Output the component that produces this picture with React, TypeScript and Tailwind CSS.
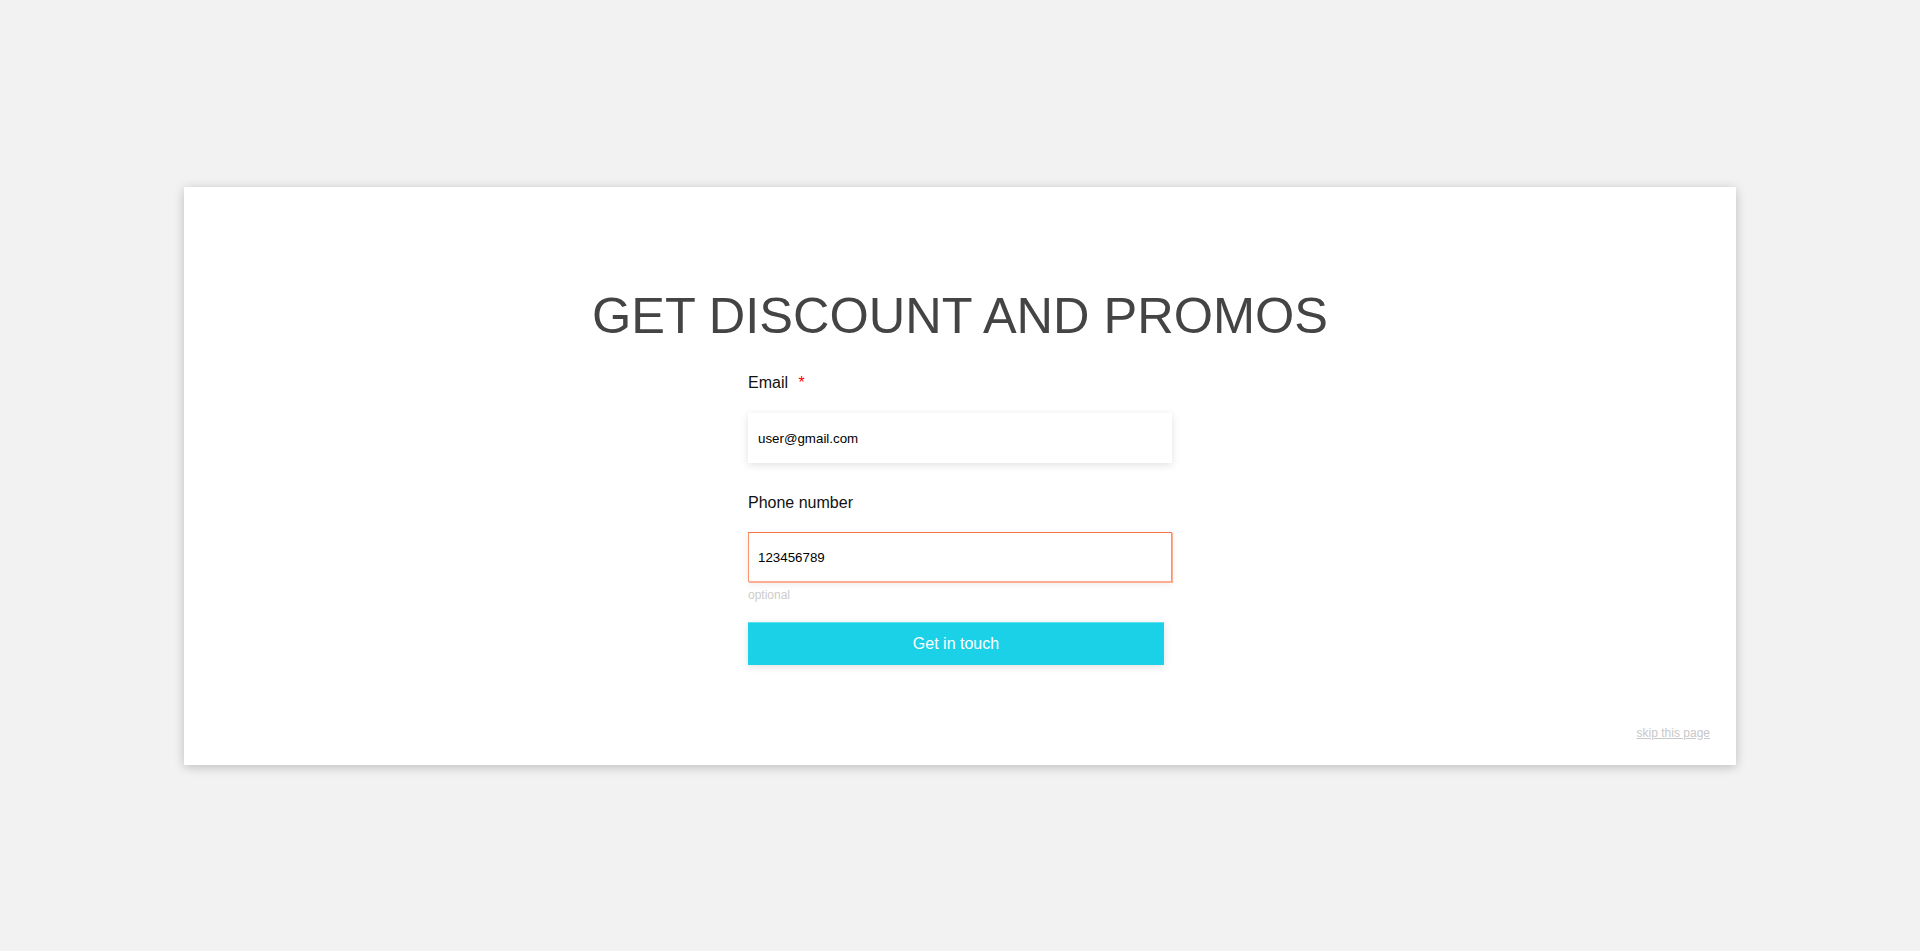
export default function App() {
  return (
    <main className="flex min-h-[951px] items-center justify-center bg-[#f2f2f2] font-['Liberation_Sans',Arial,sans-serif]">
      <section className="flex h-[578px] w-[1552px] flex-col bg-white px-[26px] pb-[24px] pt-[104px] shadow-[0_2px_10px_rgba(0,0,0,0.22)]">
        <h1 className="text-center text-[50.5px] leading-[50px] text-[#444444]">GET DISCOUNT AND PROMOS</h1>

        <form className="mx-auto mt-[30px] flex w-[424px] flex-col" onSubmit={(e) => e.preventDefault()}>
          <label className="text-[16px] leading-[24px] text-[#111111]">
            Email <span className="ml-[6px] text-[#ff0000]">*</span>
          </label>
          <input
            defaultValue="user@gmail.com"
            className="mt-[18px] h-[50px] w-full bg-white px-[10px] pt-[2px] text-[13.33px] text-black shadow-[0_2px_8px_rgba(0,0,0,0.12)] outline-none"
          />

          <label className="mt-[28px] text-[16px] leading-[24px] text-[#111111]">Phone number</label>
          <input
            defaultValue="123456789"
            className="mt-[17px] h-[50px] w-full border border-[#fa9270] border-b-[#ffab90] border-t-[#f47448] bg-white px-[9px] pt-[2px] text-[13.33px] text-black shadow-[1px_1px_0_#ffab90,0_2px_8px_rgba(0,0,0,0.08)] outline-none"
          />
          <p className="mt-[5px] text-[12px] leading-[16px] text-[#cccccc]">optional</p>

          <button
            type="submit"
            className="mt-[19px] h-[43px] w-[416px] border-t border-[#5fe2f0] bg-[#1ad1e8] text-[16px] text-white shadow-[0_2px_8px_rgba(0,0,0,0.12)]"
          >
            Get in touch
          </button>
        </form>

        <div className="mt-auto flex justify-end">
          <a href="#" className="text-[12px] leading-[16px] text-[#c8c8c8] underline">
            skip this page
          </a>
        </div>
      </section>
    </main>
  );
}
